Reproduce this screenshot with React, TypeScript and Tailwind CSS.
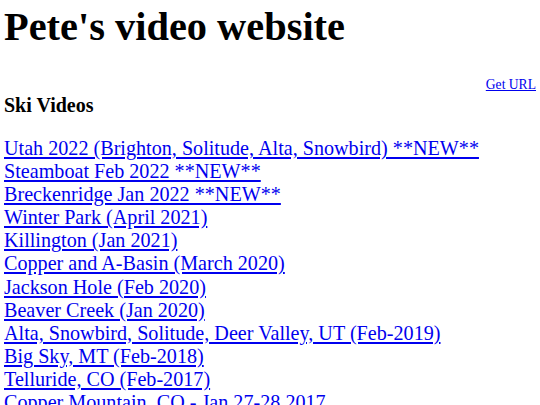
const skiVideos = [
  "Utah 2022 (Brighton, Solitude, Alta, Snowbird) **NEW**",
  "Steamboat Feb 2022 **NEW**",
  "Breckenridge Jan 2022 **NEW**",
  "Winter Park (April 2021)",
  "Killington (Jan 2021)",
  "Copper and A-Basin (March 2020)",
  "Jackson Hole (Feb 2020)",
  "Beaver Creek (Jan 2020)",
  "Alta, Snowbird, Solitude, Deer Valley, UT (Feb-2019)",
  "Big Sky, MT (Feb-2018)",
  "Telluride, CO (Feb-2017)",
  "Copper Mountain, CO - Jan 27-28 2017",
  "Vail, CO (Feb-2016)",
];

export default function App() {
  return (
    <div className="min-h-screen bg-white px-1 pt-[3px] font-['Liberation_Serif',serif] text-black">
      <h1 className="text-[40.4px] leading-[normal] font-bold">Pete's video website</h1>
      <div className="mt-[27px] text-right text-[13.6px] leading-[normal]">
        <a href="#" className="text-[#0000ee] underline">
          Get URL
        </a>
      </div>
      <h4 className="mt-[1px] text-[20px] leading-[normal] font-bold">Ski Videos</h4>
      <ul className="mt-[20px] text-[20.15px] leading-[23.1px]">
        {skiVideos.map((title) => (
          <li key={title}>
            <a href="#" className="text-[#0000ee] underline">
              {title}
            </a>
          </li>
        ))}
      </ul>
    </div>
  );
}
